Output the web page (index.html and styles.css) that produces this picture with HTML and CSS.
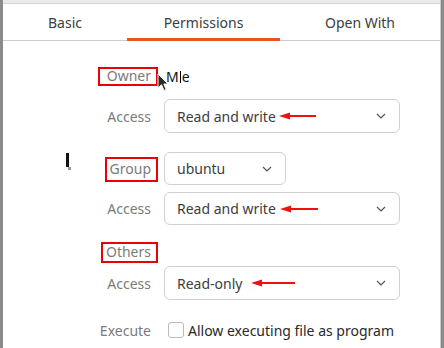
FILE: index.html
```html
<!DOCTYPE html>
<html lang="en">
<head>
<meta charset="utf-8">
<title>Properties</title>
<link rel="stylesheet" href="styles.css">
</head>
<body>
<div class="window">
  <div class="dialog">
    <div class="topstrip"></div>
    <nav class="tabs">
      <div class="tab tab-basic">Basic</div>
      <div class="tab tab-perm active">Permissions</div>
      <div class="tab tab-open">Open With</div>
    </nav>
    <main class="perms">
      <div class="row row-owner">
        <span class="label"><span class="mark mark-owner">Owner</span></span>
        <span class="owner-value">M<span class="caret"></span>e</span>
      </div>
      <div class="row row-access1">
        <span class="label">Access</span>
        <div class="dropdown wide">
          <span class="dd-text">Read and write</span>
          <svg class="red-arrow arrow-1" width="37" height="8" viewBox="0 0 37 8"><path d="M0 4 L11 0.5 L11 3 L37 3 L37 5 L11 5 L11 7.5 Z"/></svg>
          <svg class="chevron" width="10" height="6" viewBox="0 0 10 6"><path d="M1 1 L5 5 L9 1"/></svg>
        </div>
      </div>
      <div class="row row-group">
        <span class="label"><span class="mark mark-group">Group</span></span>
        <div class="dropdown narrow">
          <span class="dd-text">ubuntu</span>
          <svg class="chevron" width="10" height="6" viewBox="0 0 10 6"><path d="M1 1 L5 5 L9 1"/></svg>
        </div>
      </div>
      <div class="row row-access2">
        <span class="label">Access</span>
        <div class="dropdown wide">
          <span class="dd-text">Read and write</span>
          <svg class="red-arrow arrow-2" width="38" height="8" viewBox="0 0 38 8"><path d="M0 4 L11 0.5 L11 3 L38 3 L38 5 L11 5 L11 7.5 Z"/></svg>
          <svg class="chevron" width="10" height="6" viewBox="0 0 10 6"><path d="M1 1 L5 5 L9 1"/></svg>
        </div>
      </div>
      <div class="row row-others">
        <span class="label"><span class="mark mark-others">Others</span></span>
      </div>
      <div class="row row-access3">
        <span class="label">Access</span>
        <div class="dropdown wide">
          <span class="dd-text">Read-only</span>
          <svg class="red-arrow arrow-3" width="44" height="8" viewBox="0 0 44 8"><path d="M0 4 L11 0.5 L11 3 L44 3 L44 5 L11 5 L11 7.5 Z"/></svg>
          <svg class="chevron" width="10" height="6" viewBox="0 0 10 6"><path d="M1 1 L5 5 L9 1"/></svg>
        </div>
      </div>
      <div class="row row-execute">
        <span class="label">Execute</span>
        <span class="checkbox"></span>
        <span class="check-text">Allow executing file as program</span>
      </div>
    </main>
    <svg class="pointer" width="13" height="19" viewBox="0 0 13 19"><path d="M1 1 L1 15 L4.5 11.8 L7 17.5 L9.2 16.5 L6.8 11 L11 11 Z"/></svg>
    <svg class="stray" width="9" height="18" viewBox="0 0 9 18"><rect x="1" y="0" width="2" height="14" fill="#fff"/><rect x="3" y="0" width="3" height="14" fill="#111"/><rect x="5" y="14" width="3" height="3" fill="#999"/></svg>
  </div>
</div>
</body>
</html>
```
FILE: styles.css
```css
* { box-sizing: border-box; }
html, body { margin: 0; padding: 0; }
body {
  width: 444px;
  height: 348px;
  overflow: hidden;
  background: #ffffff;
  font-family: "Noto Sans", "Open Sans", sans-serif;
  font-size: 14px;
  color: #3d3d3d;
}
.window {
  display: flex;
  height: 348px;
  border-left: 3px solid #8b8b8b;
  border-right: 3px solid #8b8b8b;
}
.dialog {
  flex: 1;
  position: relative;
  display: flex;
  flex-direction: column;
  background: #ffffff;
  border-right: 1px solid #c8c8c8;
}
.topstrip {
  height: 4px;
  background: #ebebeb;
  border-bottom: 1px solid #d6d6d6;
}
.tabs {
  display: flex;
  height: 37px;
  border-bottom: 1px solid #cdcdcd;
}
.tab {
  height: 37px;
  margin-bottom: -1px;
  display: flex;
  align-items: center;
  justify-content: center;
  color: #3d3d3d;
  padding-bottom: 1px;
}
.tab-basic { width: 124px; }
.tab-perm { width: 153px; }
.tab-open { flex: 1; }
.tab.active { box-shadow: inset 0 -3px 0 #e95420; }

.perms {
  display: flex;
  flex-direction: column;
  padding-top: 25px;
}
.row {
  display: flex;
  align-items: center;
}
.label {
  flex-shrink: 0;
  width: 161px;
  padding-right: 13px;
  text-align: right;
  color: #7b7b7b;
}
.row-owner { height: 20px; }
.row-access1 { height: 34px; margin-top: 13px; }
.row-group { height: 33px; margin-top: 19px; }
.row-access2 { height: 33px; margin-top: 7px; }
.row-others { height: 20px; margin-top: 17px; }
.row-access3 { height: 34px; margin-top: 4px; }
.row-execute { height: 16px; margin-top: 22px; }

.mark {
  position: relative;
  display: inline-block;
  line-height: 20px;
}
.mark::after {
  content: "";
  position: absolute;
  border: 2px solid #e8000b;
}
.mark-owner::after { left: -9px; right: -7px; top: 1px; bottom: 0; }
.mark-group::after { left: -5px; right: -7px; top: -2px; bottom: -3px; }
.mark-others::after { left: -5px; right: -7px; top: 0; bottom: -1px; }

.owner-value {
  color: #111111;
  padding-left: 2px;
}
.caret {
  display: inline-block;
  width: 1px;
  height: 12px;
  margin: 0 1px 0 1px;
  background: #000000;
  vertical-align: -1px;
}

.dropdown {
  height: 100%;
  display: flex;
  align-items: center;
  padding: 0 13px 0 12px;
  border: 1px solid #d0d0d0;
  border-radius: 6px;
  background: #ffffff;
  color: #3d3d3d;
}
.dropdown.wide { width: 236px; }
.dropdown.narrow { width: 122px; }
.dd-text { white-space: nowrap; }
.chevron { margin-left: auto; flex-shrink: 0; }
.chevron path { fill: none; stroke: #555555; stroke-width: 1.2; }
.red-arrow { flex-shrink: 0; }
.red-arrow path { fill: #ee1111; }
.arrow-1 { margin-left: 3px; }
.arrow-2 { margin-left: 4px; }
.arrow-3 { margin-left: 9px; }

.checkbox {
  width: 16px;
  height: 16px;
  margin-left: 4px;
  border: 1px solid #b9b9b9;
  border-radius: 3px;
  background: #ffffff;
  flex-shrink: 0;
}
.check-text {
  margin-left: 4px;
  color: #2a2a2a;
  white-space: nowrap;
}

.pointer {
  position: absolute;
  left: 154px;
  top: 73px;
}
.pointer path { fill: #2b2b2b; stroke: #ffffff; stroke-width: 1; }
.stray {
  position: absolute;
  left: 60px;
  top: 153px;
}
```
